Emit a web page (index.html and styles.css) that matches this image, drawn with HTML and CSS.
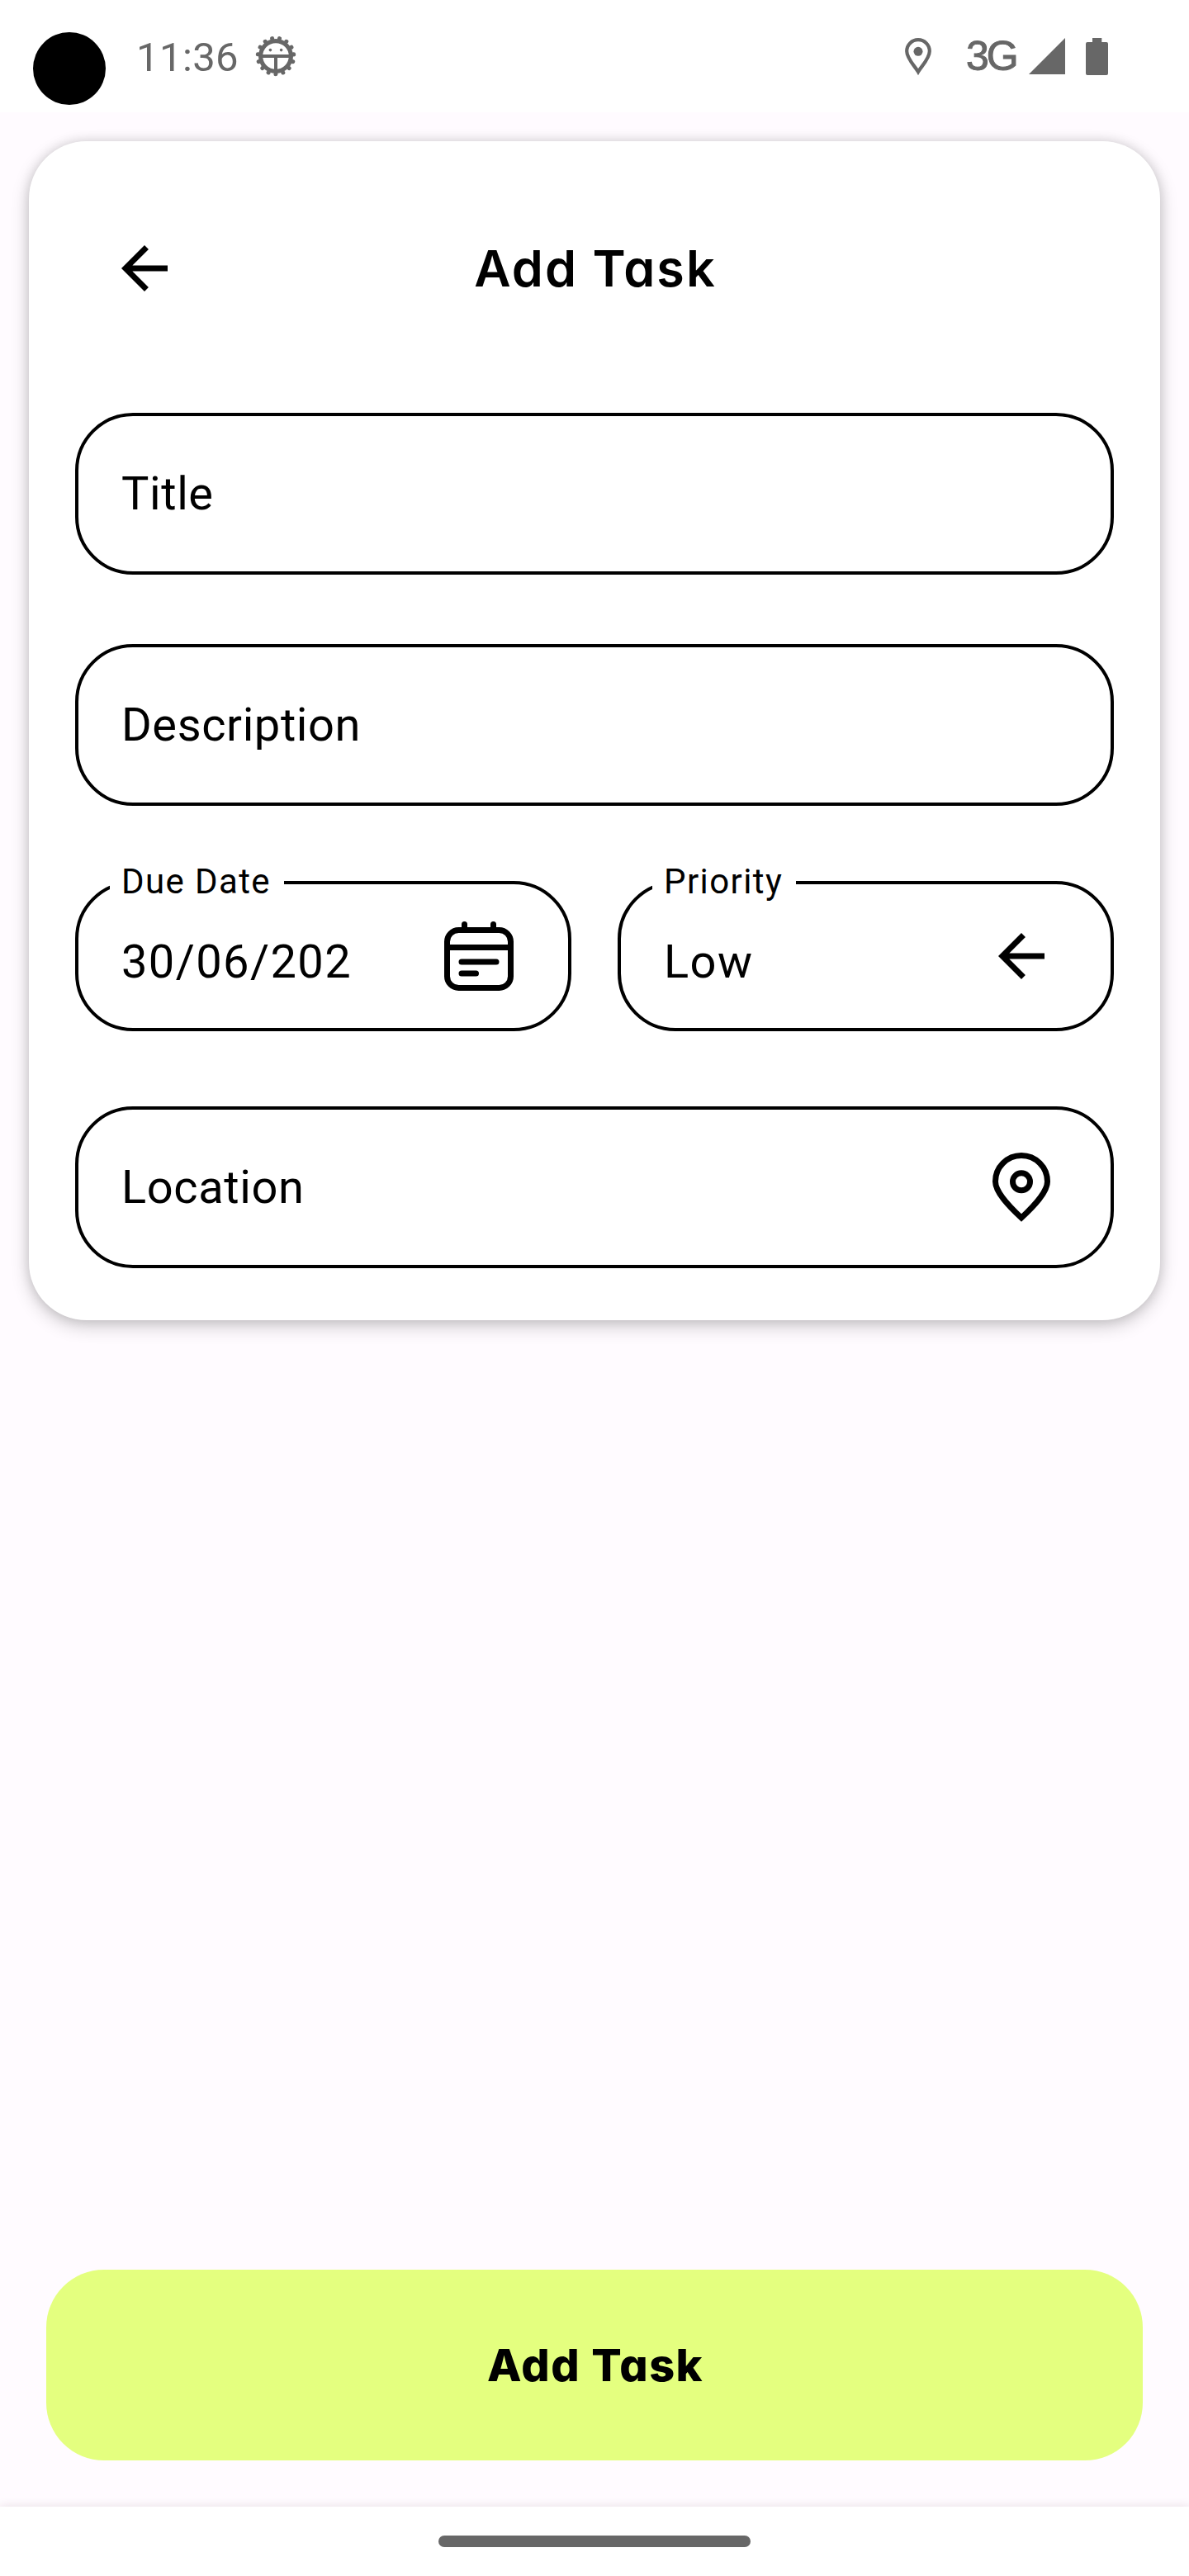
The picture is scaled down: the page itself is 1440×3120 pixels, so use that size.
FILE: index.html
```html
<!DOCTYPE html>
<html lang="en">
<head>
<meta charset="utf-8">
<title>Add Task</title>
<link rel="stylesheet" href="styles.css">
</head>
<body>
<div class="screen">
  <header class="status">
    <div class="camera"></div>
    <span class="time">11:36</span>
    <svg class="debug" viewBox="-25 -25 50 50">
      <circle r="18.4" fill="none" stroke="currentColor" stroke-width="5.2"/>
      <circle r="21.8" fill="none" stroke="currentColor" stroke-width="5" stroke-linecap="round" pathLength="150" stroke-dasharray="0.1 9.9" transform="rotate(90)"/>
      <path d="M-17 0H17M0 0V18" stroke="currentColor" stroke-width="4" fill="none"/>
      <circle cx="-6.6" cy="-7.4" r="1.8" fill="currentColor"/>
      <circle cx="6.6" cy="-7.4" r="1.8" fill="currentColor"/>
    </svg>
    <div class="spacer"></div>
    <svg class="gps" viewBox="0 0 32 45">
      <path d="M16 41C12 34 2.2 25 2.2 16A13.8 13.8 0 0 1 29.8 16C29.8 25 20 34 16 41Z" fill="none" stroke="currentColor" stroke-width="4.2"/>
      <circle cx="16" cy="16.3" r="5.5" fill="currentColor"/>
    </svg>
    <span class="network">3G</span>
    <svg class="signal" viewBox="0 0 44 44"><path d="M44 0V44H0Z" fill="currentColor"/></svg>
    <svg class="battery" viewBox="0 0 27 45"><path d="M8 0H19.3V5H25Q27 5 27 7V43Q27 45 25 45H2Q0 45 0 43V7Q0 5 2 5H8Z" fill="currentColor"/></svg>
  </header>

  <main class="content">
    <section class="card">
      <div class="toolbar">
        <svg class="icon" viewBox="0 0 24 24"><path d="M20 11H7.83l5.59-5.59L12 4l-8 8 8 8 1.41-1.41L7.83 13H20z"/></svg>
        <h1 class="heading">Add Task</h1>
      </div>
      <div class="field"><span class="value">Title</span></div>
      <div class="field"><span class="value">Description</span></div>
      <div class="row">
        <div class="field filled">
          <span class="label label-date">Due Date</span>
          <span class="value">30/06/202</span>
          <svg class="icon" viewBox="0 0 84 84">
            <g fill="none" stroke="#000" stroke-width="7">
              <rect x="3.5" y="10.5" width="77" height="70" rx="14"/>
              <path d="M3 31.5H81"/>
              <path d="M24.5 3.5V10M59.5 3.500V10M21 49H63M21 63H38.5" stroke-linecap="round"/>
            </g>
          </svg>
        </div>
        <div class="field filled">
          <span class="label label-priority">Priority</span>
          <span class="value">Low</span>
          <svg class="icon" viewBox="0 0 24 24"><path d="M20 11H7.83l5.59-5.59L12 4l-8 8 8 8 1.41-1.41L7.83 13H20z"/></svg>
        </div>
      </div>
      <div class="field">
        <span class="value">Location</span>
        <svg class="icon" viewBox="0 0 84 84">
          <g fill="none" stroke="#000" stroke-width="7">
            <path d="M42 79C27 65 10.5 48 10.5 35A31.5 31.5 0 0 1 73.5 35C73.5 48 57 65 42 79Z"/>
            <circle cx="42" cy="35.3" r="10.5"/>
          </g>
        </svg>
      </div>
    </section>
    <button class="submit">Add Task</button>
  </main>

  <footer class="navbar"><div class="handle"></div></footer>
</div>
</body>
</html>
```
FILE: styles.css
```css
* { box-sizing: border-box; }

body {
  margin: 0;
  background: #fffbff;
  font-family: Roboto, "Liberation Sans", sans-serif;
  color: #000;
}

svg { display: block; flex: none; }

.screen {
  display: flex;
  flex-direction: column;
  width: 1440px;
  height: 3120px;
  overflow: hidden;
}

.status {
  display: flex;
  align-items: center;
  height: 136px;
  padding: 0 98px 0 40px;
  background: #fff;
  color: #676767;
}

.camera {
  width: 88px;
  height: 88px;
  margin-top: 30px;
  border-radius: 50%;
  background: #000;
}

.time {
  width: 144px;
  margin: 4px 0 0 37px;
  font-size: 49px;
  line-height: 58px;
  letter-spacing: 0.4px;
}

.debug { width: 50px; height: 50px; }

.spacer { flex: 1; }

.gps { width: 32px; height: 45px; margin-right: 42px; }

.network {
  width: 76px;
  font-family: "Liberation Sans", sans-serif;
  font-size: 50px;
  line-height: 58px;
  letter-spacing: -3px;
  -webkit-text-stroke: 1px #676767;
}

.signal { width: 44px; height: 44px; margin-right: 25px; }

.battery { width: 27px; height: 45px; }

.content {
  display: flex;
  flex: 1;
  flex-direction: column;
  justify-content: space-between;
  padding: 35px 35px 56px;
}

.card {
  display: flex;
  flex-direction: column;
  height: 1428px;
  padding: 0 56px;
  border-radius: 70px;
  background: #fff;
  box-shadow: 0 7px 22px rgba(0, 0, 0, 0.2), 0 0 14px rgba(0, 0, 0, 0.12);
}

.toolbar {
  display: grid;
  flex: none;
  grid-template-columns: 84px 1fr 84px;
  align-items: center;
  height: 308px;
  margin-bottom: 21px;
  padding: 0 42px;
}

.icon { width: 84px; height: 84px; }

.heading {
  margin: 0;
  padding-left: 2px;
  font-family: Inter, sans-serif;
  font-feature-settings: "cv11";
  font-size: 61px;
  font-weight: 600;
  line-height: 80px;
  letter-spacing: 2.1px;
  text-align: center;
  white-space: nowrap;
}

.field {
  position: relative;
  display: flex;
  flex: none;
  align-items: center;
  justify-content: space-between;
  height: 196px;
  margin-bottom: 84px;
  padding: 0 66px 0 52px;
  border: 4px solid #000;
  border-radius: 70px;
}

.field:last-child { margin-bottom: 0; }

.value {
  font-size: 56px;
  line-height: 66px;
  letter-spacing: 0.6px;
  white-space: nowrap;
}

.row {
  display: grid;
  flex: none;
  grid-template-columns: 1fr 1fr;
  gap: 56px;
  margin: 7px 0 91px;
}

.filled { height: 182px; margin: 0; }

.filled .value { padding-top: 14px; letter-spacing: 1.4px; }

/* Floating label, sits over the outline and cuts it */
.label {
  position: absolute;
  top: -28px;
  left: 38px;
  padding-left: 14px;
  background: #fff;
  font-size: 42px;
  line-height: 49px;
  letter-spacing: 1.4px;
  white-space: nowrap;
}

.label-date { width: 211px; }

.label-priority { width: 174px; }

.submit {
  height: 231px;
  margin: 0 21px;
  padding: 0 0 0 2px;
  border: 0;
  border-radius: 70px;
  background: #e4ff7f;
  color: #000;
  font-family: Inter, sans-serif;
  font-feature-settings: "cv11";
  font-size: 54px;
  font-weight: 800;
  letter-spacing: 1.5px;
}

.navbar {
  display: flex;
  align-items: center;
  justify-content: center;
  height: 84px;
  background: #fff;
  box-shadow: 0 0 11px rgba(60, 20, 30, 0.13);
}

.handle {
  width: 378px;
  height: 14px;
  border-radius: 7px;
  background: #676767;
}
```
